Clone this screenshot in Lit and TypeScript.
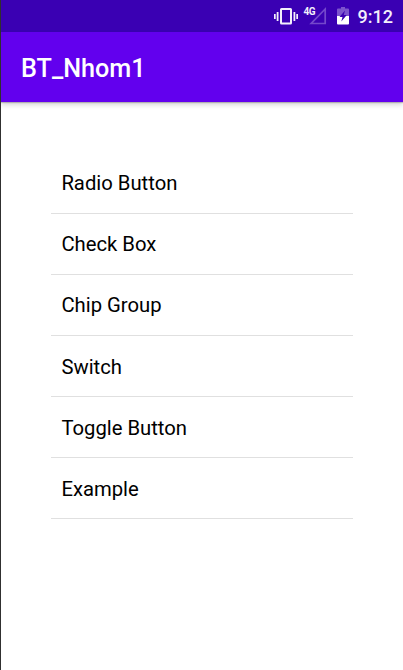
import { LitElement, html, css } from "lit";
import { customElement } from "lit/decorators.js";

@customElement("status-bar")
class StatusBar extends LitElement {
  static styles = css`
    :host {
      display: flex;
      height: 32px;
      box-sizing: border-box;
      padding-right: 10px;
      justify-content: flex-end;
      align-items: center;
      background: #3a00b3;
      color: #f3effb;
    }
    svg { display: block; }
    .network {
      font: 700 10px/12px Roboto, sans-serif;
      letter-spacing: -0.5px;
      width: 12px;
      margin: 0 -7px 9px 5px;
      transform: scaleY(1.15);
    }
    .battery { margin-left: 10px; }
    .clock {
      font: 500 18px/32px Roboto, sans-serif;
      margin-left: 9px;
      padding-top: 1px;
      box-sizing: border-box;
      height: 32px;
    }
  `;
  render() {
    return html`
      <svg width="25" height="32" viewBox="0 0 25 32" fill="currentColor">
        <path d="M0 14h1.700v5H0zM2.700 12h1.800v9H2.700zM19.500 12h1.800v9h-1.800zM22.300 14H24v5h-1.700z" />
        <path fill-rule="evenodd" d="M7.500 8h9q1.500 0 1.500 1.500v13.500q0 1.500-1.500 1.500h-9Q6 24.500 6 23V9.500Q6 8 7.500 8zM8 10v12.500h8V10z" />
      </svg>
      <span class="network">4G</span>
      <svg width="18" height="32" viewBox="0 0 18 32">
        <path d="M16.200 9V23.500H2.200z" fill="none" stroke="#7448cb" stroke-width="1.700" />
      </svg>
      <svg class="battery" width="12" height="32" viewBox="0 0 12 32">
        <path d="M4 7h4v1.500h3q1 0 1 1V16H0V9.500q0-1 1-1h3z" fill="#7c54cd" />
        <path d="M0 16h12v7.500q0 1-1 1H1q-1 0-1-1z" fill="#fff" />
        <path d="M8 10.500L2.500 17H5.500L4.300 21.500L9.800 15H6.800z" fill="#3a00b3" />
      </svg>
      <span class="clock">9:12</span>
    `;
  }
}

@customElement("app-root")
class AppRoot extends LitElement {
  static styles = css`
    :host {
      display: block;
      height: 670px;
      box-sizing: border-box;
      border-left: 1px solid #303030;
      background: #fff;
      overflow: hidden;
      font-family: Roboto, sans-serif;
    }
    .toolbar {
      height: 70px;
      box-sizing: border-box;
      padding: 2px 20px 0;
      background: #6200ee;
      box-shadow: 0 1px 1px rgba(0, 0, 0, 0.2), 0 3px 5px rgba(0, 0, 0, 0.16);
      color: #fff;
      font-size: 25.2px;
      font-weight: 500;
      line-height: 70px;
    }
    .list {
      margin: 51px 50px 0;
      padding: 0;
      list-style: none;
    }
    .item {
      height: 61px;
      box-sizing: border-box;
      padding-left: 10.4px;
      border-bottom: 1px solid #e0e0e0;
      color: #000;
      font-size: 20.25px;
      line-height: 61px;
    }
    .item:nth-child(n + 4) { line-height: 63px; }
  `;
  private items = ["Radio Button", "Check Box", "Chip Group", "Switch", "Toggle Button", "Example"];
  render() {
    return html`
      <status-bar></status-bar>
      <header class="toolbar">BT_Nhom1</header>
      <ul class="list">
        ${this.items.map((name) => html`<li class="item">${name}</li>`)}
      </ul>
    `;
  }
}
